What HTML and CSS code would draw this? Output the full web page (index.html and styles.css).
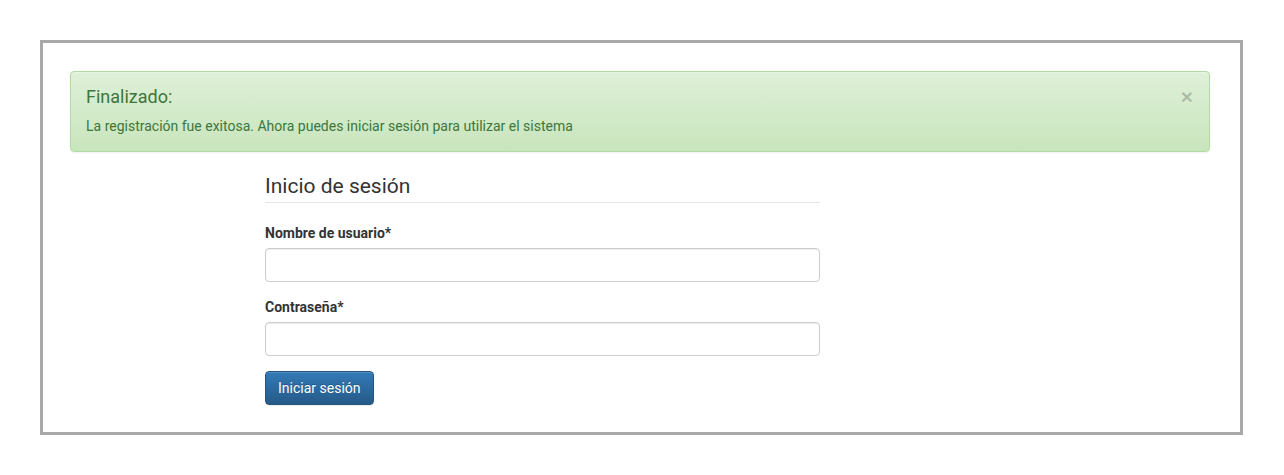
FILE: index.html
```html
<!DOCTYPE html>
<html lang="es">
<head>
<meta charset="utf-8">
<title>Inicio de sesión</title>
<link rel="stylesheet" href="styles.css">
</head>
<body>
<div class="frame">
  <div class="container">
    <div class="alert">
      <button class="close" type="button" aria-label="Cerrar">×</button>
      <h4 class="alert-title">Finalizado:</h4>
      <p class="alert-text">La registración fue exitosa. Ahora puedes iniciar sesión para utilizar el sistema</p>
    </div>
    <form class="login">
      <div class="legend">Inicio de sesión</div>
      <div class="form-group">
        <label class="label" for="user">Nombre de usuario*</label>
        <input class="input" id="user" type="text">
      </div>
      <div class="form-group">
        <label class="label" for="pass">Contraseña*</label>
        <input class="input" id="pass" type="password">
      </div>
      <button class="btn" type="button">Iniciar sesión</button>
    </form>
  </div>
</div>
</body>
</html>
```

FILE: styles.css
```css
* { box-sizing: border-box; }
html, body { margin: 0; padding: 0; background: #fff; }
body {
  padding: 40px 41px 0 40px;
  font-family: Roboto, "Liberation Sans", sans-serif;
  font-size: 14px;
  line-height: 20px;
  color: #333;
}
.frame {
  border: 3px solid #a9a9a9;
  height: 395px;
  padding: 28px 0 0;
}
.container {
  width: 1140px;
  margin-left: 27px;
}
.alert {
  position: relative;
  height: 81px;
  padding: 15px 35px 15px 15px;
  border: 1px solid #b2dba1;
  border-radius: 4px;
  color: #3c763d;
  background: linear-gradient(to bottom, #dff0d8 0%, #c8e5bc 100%);
  box-shadow: inset 0 1px 0 rgba(255,255,255,.25), 0 1px 2px rgba(0,0,0,.05);
  margin-bottom: 22px;
}
.alert-title {
  margin: 0 0 9px;
  font-size: 18px;
  line-height: 20px;
  font-weight: 400;
}
.alert-text {
  margin: 0;
  font-size: 14px;
  line-height: 20px;
}
.close {
  position: absolute;
  top: 14px;
  right: 16px;
  padding: 0;
  border: 0;
  background: transparent;
  font-family: "Liberation Sans", sans-serif;
  font-size: 21px;
  font-weight: 700;
  line-height: 1;
  color: #000;
  opacity: .2;
  text-shadow: 0 1px 0 #fff;
  cursor: pointer;
}
.login {
  width: 555px;
  margin-left: 195px;
}
.legend {
  font-size: 21px;
  line-height: 24px;
  padding-bottom: 4px;
  border-bottom: 1px solid #e5e5e5;
  margin-bottom: 20px;
}
.form-group { margin-bottom: 15px; }
.label {
  display: block;
  font-weight: 700;
  margin-bottom: 5px;
}
.input {
  display: block;
  width: 100%;
  height: 34px;
  padding: 6px 12px;
  font: inherit;
  border: 1px solid #ccc;
  border-radius: 4px;
  box-shadow: inset 0 1px 1px rgba(0,0,0,.075);
  background: #fff;
}
.btn {
  display: block;
  height: 34px;
  padding: 6px 12px;
  font: inherit;
  color: #fff;
  border: 1px solid #245580;
  border-radius: 4px;
  background: linear-gradient(to bottom, #337ab7 0%, #265a88 100%);
  box-shadow: inset 0 1px 0 rgba(255,255,255,.15), 0 1px 1px rgba(0,0,0,.075);
  text-shadow: 0 -1px 0 rgba(0,0,0,.2);
  cursor: pointer;
}
```
